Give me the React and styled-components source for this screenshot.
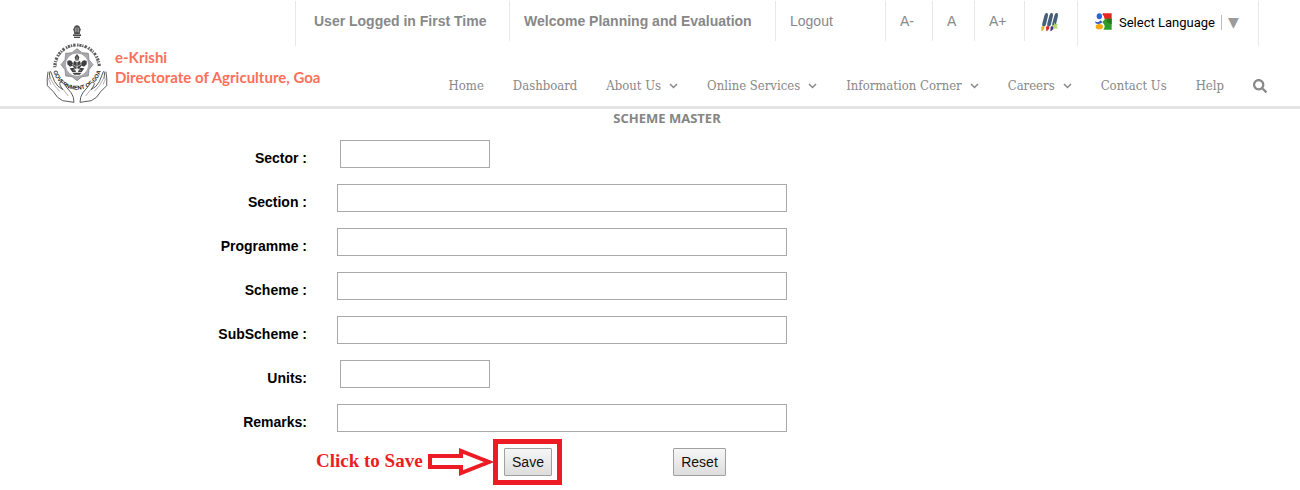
import React from "react";
import styled, { createGlobalStyle } from "styled-components";
import { FaSearch } from "react-icons/fa";

const GlobalStyle = createGlobalStyle`
  * { box-sizing: border-box; }
  body {
    margin: 0;
    background: #fff;
    color: #000;
    font-family: "Liberation Sans", Arial, sans-serif;
    font-size: 14px;
  }
`;

const Header = styled.header`
  display: flex;
  min-height: 109px;
  border-bottom: 3px solid #e4e4e4;
`;

const Brand = styled.a`
  display: flex;
  flex: 1 1 0;
  min-width: 0;
  align-items: flex-start;
  gap: 7px;
  padding: 24px 0 0 46px;
  color: #ff6f59;
  text-decoration: none;
`;

const EmblemArt = styled.svg`
  flex: none;
`;

const BrandText = styled.span`
  padding-top: 23px;
  font-family: Lato, sans-serif;
  font-size: 15px;
  font-weight: 700;
  line-height: 20px;
  white-space: nowrap;
`;

const HeaderSide = styled.div`
  display: flex;
  flex: none;
  flex-direction: column;
  align-items: flex-end;
`;

const TopBar = styled.div`
  display: flex;
  margin: 1px 41px 0 0;
  height: 45px;
`;

const Cell = styled.div`
  display: flex;
  align-items: flex-start;
  width: ${(p) => p.$width}px;
  height: ${(p) => (p.$tall ? 45 : 40)}px;
  padding: ${(p) => p.$top || 11}px 0 0 ${(p) => p.$inset || 14}px;
  border-left: 1px solid #e8e8e8;
  border-right: ${(p) => (p.$last ? "1px solid #e8e8e8" : "0")};
  color: #888;
  line-height: 18px;
  white-space: nowrap;
`;

const TopText = styled.span`
  font-size: 14px;
  font-weight: 700;
`;

const TopLink = styled.a`
  color: #888;
  font-size: 14px;
  text-decoration: none;
`;

const PlainButton = styled.button`
  padding: 0;
  border: 0;
  background: none;
  color: #888;
  font: inherit;
  cursor: pointer;
`;

const LanguageSelect = styled.select`
  appearance: none;
  width: 99px;
  height: 18px;
  margin-left: 7px;
  padding: 0;
  border: 0;
  background: none;
  color: #000;
  font-family: Roboto, "Liberation Sans", sans-serif;
  font-size: 13px;
`;

const Caret = styled.span`
  height: 15px;
  margin: 2px 0 0 3px;
  padding-left: 6px;
  border-left: 1px solid #bbb;
  color: #9b9b9b;
  font-family: "DejaVu Sans", sans-serif;
  font-size: 14px;
  line-height: 15px;
`;

const Nav = styled.nav`
  display: flex;
  align-items: center;
  gap: 29px;
  height: 20px;
  margin: 30px 33px 0 0;
`;

const NavLink = styled.a`
  display: flex;
  align-items: center;
  gap: 8px;
  color: #888;
  font-family: "DejaVu Serif Condensed", "DejaVu Serif", serif;
  font-size: 13px;
  line-height: 20px;
  text-decoration: none;
  white-space: nowrap;
`;

const SearchButton = styled(PlainButton)`
  display: flex;
`;

const Title = styled.h1`
  margin: 0;
  padding-left: 34px;
  color: #858585;
  font-family: "Noto Sans", sans-serif;
  font-size: 13px;
  font-weight: 700;
  line-height: 18px;
  text-align: center;
`;

const Form = styled.form`
  display: flex;
  flex-direction: column;
  gap: 16px;
  padding-top: 13px;
`;

const Field = styled.div`
  display: flex;
  gap: ${(p) => (p.$short ? 33 : 30)}px;
`;

const Label = styled.label`
  width: 307px;
  padding-top: 8px;
  font-size: 14px;
  font-weight: 700;
  line-height: 20px;
  text-align: right;
`;

const TextBox = styled.input`
  width: ${(p) => (p.$short ? 150 : 450)}px;
  height: 28px;
  padding: 2px 6px;
  border: 1px solid #a9a9a9;
  background: #fff;
  font: inherit;
`;

const Actions = styled.div`
  display: flex;
  align-items: center;
  margin-top: -9px;
  padding-left: 316px;
`;

const Hint = styled.span`
  width: 112px;
  padding-bottom: 2px;
  color: #ed1c24;
  font-family: "Liberation Serif", serif;
  font-size: 19px;
  font-weight: 700;
  line-height: 24px;
  white-space: nowrap;
`;

const Highlight = styled.div`
  margin-right: 111px;
  padding: 4px 5px 4px 6px;
  border: 5px solid #ed1c24;
`;

const FormButton = styled.button`
  width: ${(p) => p.$width}px;
  height: 28px;
  padding: 0;
  border: 1px solid #a0a0a0;
  border-radius: 1px;
  background: linear-gradient(#f6f6f6, #dddddd);
  color: #111;
  font-family: "Liberation Sans", sans-serif;
  font-size: 14px;
`;

const STAR = Array.from({ length: 16 }, (_, i) => {
  const r = i % 2 ? 39 : 48;
  const a = (i * Math.PI) / 8;
  return `${141 + r * Math.sin(a)},${149 - r * Math.cos(a)}`;
}).join(" ");

const Emblem = () => (
  <EmblemArt width="62" height="80" viewBox="48 27 186 240" role="img" aria-label="Government of Goa">
    <g fill="#4a4a4a">
      <path d="M134 34 Q141 28 148 34 L152 43 L149 57 H133 L130 43Z" />
      <rect x="129" y="58" width="24" height="5" />
      <rect x="132" y="65" width="18" height="4" />
    </g>
    <path d="M136 38v14M141 36v16M146 38v14" stroke="#ccc" strokeWidth="2" />
    <path d="M74 157 A67 67 0 0 1 208 157" fill="none" stroke="#5a5a5a" strokeWidth="9" strokeDasharray="4 3 6 3 3 4 7 5" />
    <path d="M79 154 A62 62 0 0 1 203 154" fill="none" stroke="#6b6b6b" strokeWidth="2" strokeDasharray="9 4 13 6" />
    <path id="ring-bottom" d="M68 151 A73 73 0 0 0 214 151" fill="none" />
    <text fill="#222" fontFamily="Liberation Sans" fontSize="17" fontWeight="700">
      <textPath href="#ring-bottom" startOffset="50%" textAnchor="middle">GOVERNMENT OF GOA</textPath>
    </text>
    <polygon points={STAR} fill="#a9a9b1" stroke="#777" strokeWidth="2" />
    <circle cx="141" cy="149" r="35" fill="#fff" stroke="#888" strokeWidth="2" />
    <g fill="#3f3f3f">
      <path d="M141 117 l7 10 -3 10 h-8 l-3-10z" />
      <path d="M112 138 q10-6 15 3 l4 10 -11 4 -8-7z" />
      <path d="M170 138 q-10-6-15 3 l-4 10 11 4 8-7z" />
      <path d="M132 137 q9 8 18 0 l4 16 -8 9 h-10 l-8-9z" />
      <path d="M119 160 l14-2 5 13 h-11z" />
      <path d="M163 160 l-14-2 -5 13 h11z" />
      <path d="M127 173 h28 l-6 6 h-16z" />
    </g>
    <path d="M141 125v43M126 147l14 9 15-9M130 166l11-6 11 6" fill="none" stroke="#e7e7e7" strokeWidth="2" />
    <g fill="#fff" stroke="#5c5c5c" strokeWidth="3" strokeLinejoin="round" strokeLinecap="round">
      <path d="M54 171 Q50 192 52 212 L70 230 Q81 250 98 257 L132 262 Q132 246 124 234 L108 215 Q97 199 91 202 Q85 207 99 224 Q82 216 74 200 L62 170 Q56 166 60 190" />
      <path d="M228 171 Q232 192 230 212 L212 230 Q201 250 184 257 L150 262 Q150 246 158 234 L174 215 Q185 199 191 202 Q197 207 183 224 Q200 216 208 200 L220 170 Q226 166 222 190" />
    </g>
    <path d="M61 190l12 21 16 18M100 224l15 19M221 190l-12 21-16 18M182 224l-15 19M55 190l8 19M227 190l-8 19" fill="none" stroke="#888" strokeWidth="2" />
  </EmblemArt>
);

const Brushes = () => (
  <svg width="19" height="20" viewBox="480 36 57 60" aria-hidden="true">
    <g fill="#456078">
      <path d="M499 39 q6-2 5 8 l-6 26 q-2 9-10 6 -3-1-1-9 l6-23 q2-7 6-8z" />
      <path d="M514 39 q6-2 5 8 l-6 26 q-2 9-10 6 -3-1-1-9 l6-23 q2-7 6-8z" />
      <path d="M529 39 q6-2 5 8 l-6 26 q-2 9-10 6 -3-1-1-9 l6-23 q2-7 6-8z" />
    </g>
    <path d="M484 80 q6-5 9 1 1 8-9 13z" fill="#e6b422" />
    <path d="M498 80 q7-5 10 1 0 9-9 13z" fill="#e52628" />
    <path d="M512 80 q7-5 9 1 0 9-10 13z" fill="#48348a" />
    <path d="M523 67 l3 6 8-1 -4 7 4 7 -8-1 -5 4 -1-8 -5-4 7-3z" fill="#b5d96f" />
  </svg>
);

const TranslateLogo = () => (
  <svg width="17" height="17" viewBox="0 0 51 51" aria-hidden="true">
    <path d="M24 1 H50 V19 H29 Q28 8 22 4z" fill="#e5281f" />
    <path d="M31 17 H50 V50 H25 Q32 42 27 34 L22 27z" fill="#2f9b28" />
    <path d="M38 17 H50 V34 Q40 33 34 24z" fill="#217b1d" />
    <ellipse cx="13" cy="10" rx="8" ry="9" fill="#2d66d4" />
    <path d="M0 25 q9 7 17-3 l5 6 q-10 8-20 3z" fill="#2858b9" />
    <ellipse cx="13" cy="41" rx="11" ry="8" fill="#f4aa11" />
  </svg>
);

const Chevron = () => (
  <svg width="9" height="6" viewBox="0 0 18 12" aria-hidden="true">
    <path d="M2 2 L9 9 L16 2" fill="none" stroke="#888" strokeWidth="3" />
  </svg>
);

const Arrow = () => (
  <svg width="65" height="28" viewBox="0 0 65 28" aria-hidden="true">
    <path d="M2 8 H33 V3 L61 14 L33 25 V19 H2 Z" fill="#fff" stroke="#ed1c24" strokeWidth="4" />
    <path d="M56 10 L65 14 L56 18z" fill="#ed1c24" />
  </svg>
);

const NAV = [
  { text: "Home" },
  { text: "Dashboard" },
  { text: "About Us", menu: true },
  { text: "Online Services", menu: true },
  { text: "Information Corner", menu: true },
  { text: "Careers", menu: true },
  { text: "Contact Us" },
  { text: "Help" },
];

const FIELDS = [
  { id: "sector", label: "Sector :", short: true },
  { id: "section", label: "Section :" },
  { id: "programme", label: "Programme :" },
  { id: "scheme", label: "Scheme :" },
  { id: "subscheme", label: "SubScheme :" },
  { id: "units", label: "Units:", short: true },
  { id: "remarks", label: "Remarks:" },
];

export default function App() {
  return (
    <>
      <GlobalStyle />
      <Header>
        <Brand href="#">
          <Emblem />
          <BrandText>
            e-Krishi
            <br />
            Directorate of Agriculture, Goa
          </BrandText>
        </Brand>
        <HeaderSide>
          <TopBar>
            <Cell $width={214} $inset={18} $tall>
              <TopText>User Logged in First Time</TopText>
            </Cell>
            <Cell $width={266}>
              <TopText>Welcome Planning and Evaluation</TopText>
            </Cell>
            <Cell $width={110}>
              <TopLink href="#">Logout</TopLink>
            </Cell>
            <Cell $width={47}>
              <PlainButton type="button">A-</PlainButton>
            </Cell>
            <Cell $width={42}>
              <PlainButton type="button">A</PlainButton>
            </Cell>
            <Cell $width={50}>
              <PlainButton type="button">A+</PlainButton>
            </Cell>
            <Cell $width={53} $inset={15}>
              <PlainButton type="button" aria-label="Theme">
                <Brushes />
              </PlainButton>
            </Cell>
            <Cell $width={182} $inset={17} $top={12} $tall $last>
              <TranslateLogo />
              <LanguageSelect aria-label="Select Language">
                <option>Select Language</option>
              </LanguageSelect>
              <Caret aria-hidden="true">▼</Caret>
            </Cell>
          </TopBar>
          <Nav>
            {NAV.map((n) => (
              <NavLink key={n.text} href="#">
                {n.text}
                {n.menu && <Chevron />}
              </NavLink>
            ))}
            <SearchButton type="button" aria-label="Search">
              <FaSearch size={14} />
            </SearchButton>
          </Nav>
        </HeaderSide>
      </Header>
      <main>
        <Title>SCHEME MASTER</Title>
        <Form>
          {FIELDS.map((f) => (
            <Field key={f.id} $short={f.short}>
              <Label htmlFor={f.id}>{f.label}</Label>
              <TextBox id={f.id} type="text" $short={f.short} />
            </Field>
          ))}
          <Actions>
            <Hint>Click to Save</Hint>
            <Arrow />
            <Highlight>
              <FormButton type="button" $width={48}>Save</FormButton>
            </Highlight>
            <FormButton type="reset" $width={53}>Reset</FormButton>
          </Actions>
        </Form>
      </main>
    </>
  );
}
